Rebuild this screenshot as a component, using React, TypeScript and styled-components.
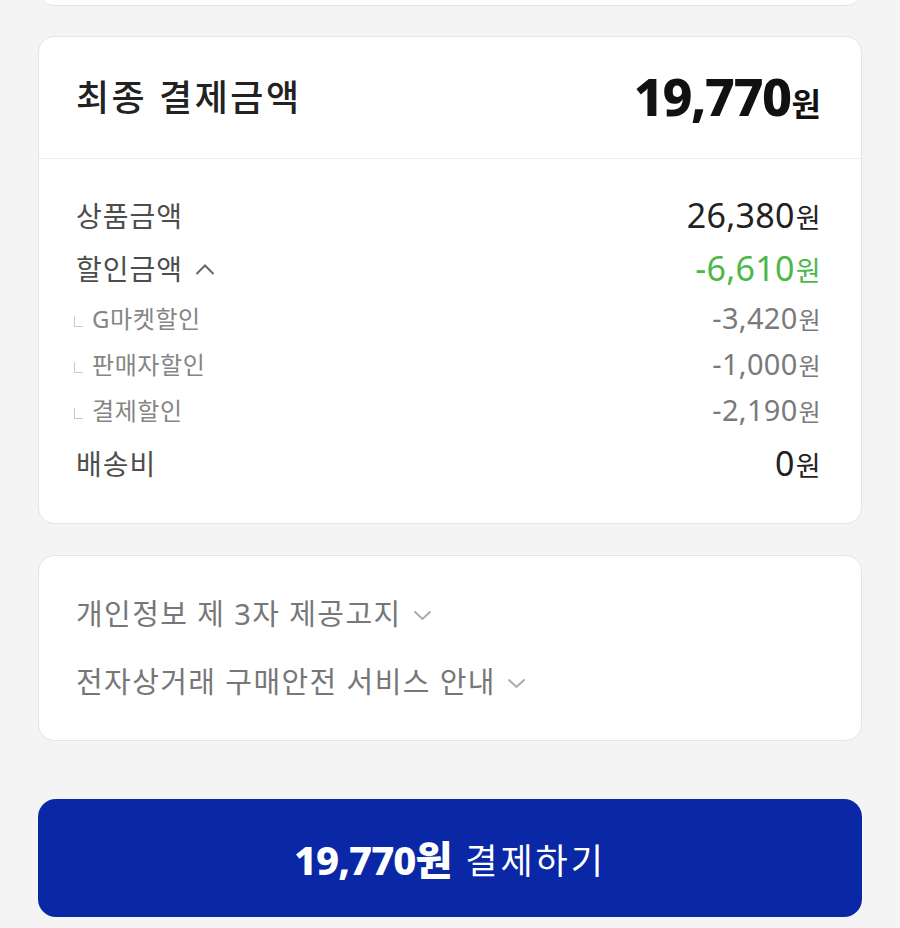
import React from 'react';
import styled, { createGlobalStyle } from 'styled-components';

const GlobalStyle = createGlobalStyle`
  html, body {
    margin: 0;
    padding: 0;
    background: #f4f4f4;
  }
  body {
    font-family: 'Noto Sans', 'Noto Sans CJK KR', sans-serif;
    color: #222;
  }
`;

const Page = styled.main`
  display: flex;
  flex-direction: column;
  padding: 0 38px 10px;
  overflow: hidden;
`;

const Card = styled.section`
  background: #fff;
  border: 1.5px solid #e4e4e4;
  border-radius: 16px;
  box-sizing: border-box;
`;

const PrevCard = styled(Card)`
  height: 41px;
  margin-top: -35px;
`;

const SummaryCard = styled(Card)`
  margin-top: 30px;
`;

const Header = styled.header`
  display: flex;
  align-items: center;
  justify-content: space-between;
  height: 122px;
  padding: 0 40px 4px 37px;
  box-sizing: border-box;
  border-bottom: 1.5px solid #ececec;
`;

const Title = styled.h2`
  margin: 0;
  font-size: 36px;
  font-weight: 500;
  color: #222;
  letter-spacing: 2.5px;
`;

const Total = styled.div`
  display: flex;
  align-items: baseline;
  font-weight: 800;
  color: #111;
`;

const TotalNumber = styled.span`
  font-size: 52px;
  letter-spacing: -1.5px;
`;

const TotalUnit = styled.span`
  font-size: 32px;
  font-weight: 700;
  margin-left: 1px;
`;

const Body = styled.div`
  padding: 29px 40px 34px 37px;
`;

const Row = styled.div<{ $sub?: boolean }>`
  display: flex;
  align-items: center;
  justify-content: space-between;
  height: ${(p) => (p.$sub ? '46px' : '53px')};
`;

const SubList = styled.div`
  padding-bottom: 4px;
`;

const Label = styled.span`
  display: flex;
  align-items: center;
  font-size: 28px;
  color: #4d4d4d;
  letter-spacing: 1px;
`;

const SubLabel = styled.span`
  display: flex;
  align-items: center;
  font-size: 24px;
  color: #858585;
  letter-spacing: 0.6px;
`;

const Corner = styled.span`
  display: inline-block;
  width: 8px;
  height: 10px;
  border-left: 1.5px solid #c9c9c9;
  border-bottom: 1.5px solid #c9c9c9;
  margin: 8px 9px 0 -2px;
`;

const Amount = styled.span<{ $tone?: 'dark' | 'green' | 'grey' }>`
  display: flex;
  align-items: baseline;
  font-size: ${(p) => (p.$tone === 'grey' ? '29px' : '34px')};
  color: ${(p) =>
    p.$tone === 'green' ? '#4cb84a' : p.$tone === 'grey' ? '#7a7a7a' : '#222'};
  letter-spacing: 0.3px;
`;

const Unit = styled.span<{ $small?: boolean }>`
  font-size: ${(p) => (p.$small ? '24px' : '27px')};
  margin-left: 1px;
`;

const Caret = styled.svg`
  margin-left: 12px;
  margin-top: 4px;
`;

const NoticeCard = styled(Card)`
  margin-top: 31px;
  padding: 22px 37px 26px;
`;

const NoticeRow = styled.div`
  display: flex;
  align-items: center;
  height: 68px;
  font-size: 29px;
  color: #777;
  letter-spacing: 1.4px;
`;

const Chevron = styled.svg`
  margin-left: 11px;
  margin-top: 6px;
`;

const PayButton = styled.button`
  margin-top: 58px;
  height: 118px;
  border: none;
  border-radius: 18px;
  background: #0a27a6;
  color: #fff;
  font-family: inherit;
  display: flex;
  align-items: center;
  justify-content: center;
  gap: 14px;
  cursor: pointer;
`;

const PayAmount = styled.span`
  font-size: 40px;
  font-weight: 800;
  letter-spacing: -1px;
`;

const PayText = styled.span`
  font-size: 35px;
  font-weight: 400;
  letter-spacing: 3px;
`;

const UpIcon = () => (
  <Caret width="20" height="11" viewBox="0 0 20 11" fill="none">
    <polyline points="1.5,10 10,1.5 18.5,10" stroke="#666" strokeWidth="2" />
  </Caret>
);

const DownIcon = () => (
  <Chevron width="19" height="11" viewBox="0 0 19 11" fill="none">
    <polyline points="1.5,1.5 9.5,9 17.5,1.5" stroke="#ababab" strokeWidth="2" />
  </Chevron>
);

const discounts = [
  { label: 'G마켓할인', value: '-3,420' },
  { label: '판매자할인', value: '-1,000' },
  { label: '결제할인', value: '-2,190' },
];

export default function App() {
  return (
    <>
      <GlobalStyle />
      <Page>
        <PrevCard />
        <SummaryCard>
          <Header>
            <Title>최종 결제금액</Title>
            <Total>
              <TotalNumber>19,770</TotalNumber>
              <TotalUnit>원</TotalUnit>
            </Total>
          </Header>
          <Body>
            <Row>
              <Label>상품금액</Label>
              <Amount>
                26,380<Unit>원</Unit>
              </Amount>
            </Row>
            <Row>
              <Label>
                할인금액
                <UpIcon />
              </Label>
              <Amount $tone="green">
                -6,610<Unit>원</Unit>
              </Amount>
            </Row>
            <SubList>
              {discounts.map((d) => (
                <Row $sub key={d.label}>
                  <SubLabel>
                    <Corner />
                    {d.label}
                  </SubLabel>
                  <Amount $tone="grey">
                    {d.value}
                    <Unit $small>원</Unit>
                  </Amount>
                </Row>
              ))}
            </SubList>
            <Row>
              <Label>배송비</Label>
              <Amount>
                0<Unit>원</Unit>
              </Amount>
            </Row>
          </Body>
        </SummaryCard>
        <NoticeCard>
          <NoticeRow>
            개인정보 제 3자 제공고지
            <DownIcon />
          </NoticeRow>
          <NoticeRow>
            전자상거래 구매안전 서비스 안내
            <DownIcon />
          </NoticeRow>
        </NoticeCard>
        <PayButton>
          <PayAmount>19,770원</PayAmount>
          <PayText>결제하기</PayText>
        </PayButton>
      </Page>
    </>
  );
}
